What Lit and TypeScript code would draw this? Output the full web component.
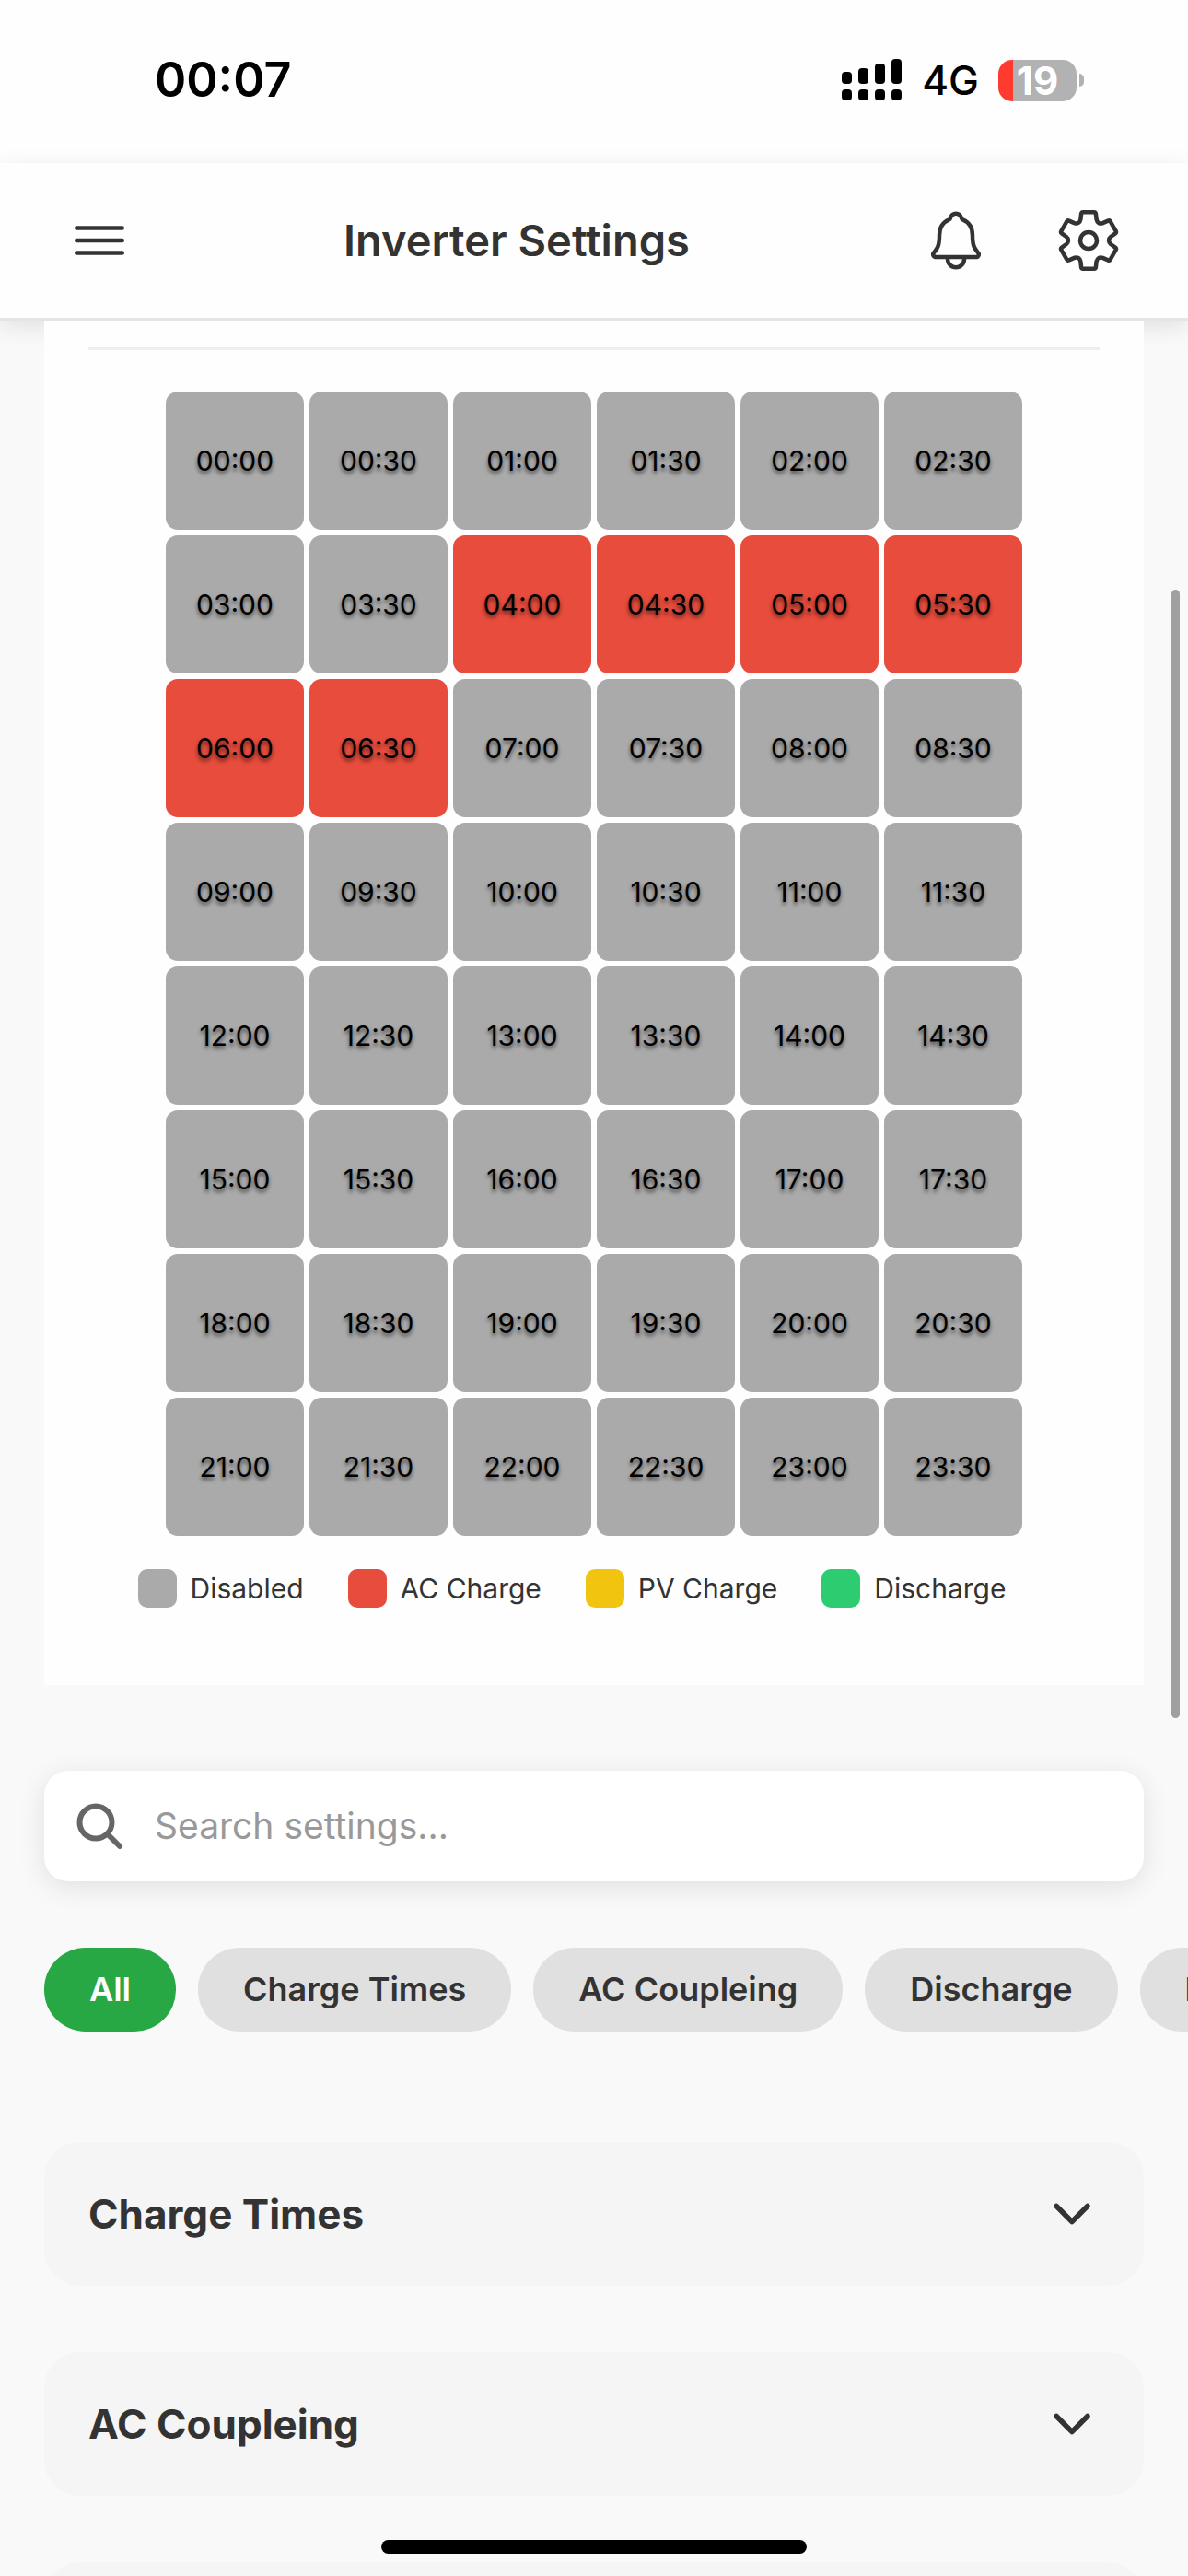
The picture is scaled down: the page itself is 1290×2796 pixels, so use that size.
import { LitElement, html, css, svg } from "lit";
import { customElement, property, state } from "lit/decorators.js";
import { classMap } from "lit/directives/class-map.js";

type Mode = "disabled" | "ac" | "pv" | "discharge";

interface Slot {
  time: string;
  mode: Mode;
}

const MODES: { mode: Mode; label: string }[] = [
  { mode: "disabled", label: "Disabled" },
  { mode: "ac", label: "AC Charge" },
  { mode: "pv", label: "PV Charge" },
  { mode: "discharge", label: "Discharge" },
];

const CATEGORIES = ["All", "Charge Times", "AC Coupleing", "Discharge", "Inverter"];
const SECTIONS = ["Charge Times", "AC Coupleing", "Discharge"];

/* Half-hour slots of one day; AC charging runs from 04:00 up to 07:00. */
const SLOTS: Slot[] = Array.from({ length: 48 }, (_, i) => {
  const hour = String(Math.floor(i / 2)).padStart(2, "0");
  const minute = i % 2 ? "30" : "00";
  return { time: `${hour}:${minute}`, mode: i >= 8 && i < 14 ? "ac" : "disabled" };
});

/* Outline of a six-toothed gear centred on the origin. */
function gearPath(): string {
  const parts: string[] = [];
  for (let k = 0; k < 6; k++) {
    const a = (k * Math.PI) / 3;
    const p = (x: number, y: number) =>
      `${(x * Math.cos(a) - y * Math.sin(a)).toFixed(2)} ${(x * Math.sin(a) + y * Math.cos(a)).toFixed(2)}`;
    parts.push(
      `${k === 0 ? "M" : "L"}${p(-8.6, -22.8)}`,
      `L${p(-7.9, -29)}`,
      `Q${p(-7.7, -30.8)} ${p(-6, -30.8)}`,
      `L${p(6, -30.8)}`,
      `Q${p(7.7, -30.8)} ${p(7.9, -29)}`,
      `L${p(8.6, -22.8)}`,
      `C${p(9.2, -19.3)} ${p(12.2, -17.6)} ${p(15.4, -18.9)}`
    );
  }
  return parts.join("") + "Z";
}

const menuIcon = svg`<path d="M80 160h352M80 256h352M80 352h352" stroke-width="32" />`;
const bellIcon = svg`<path stroke-width="32" d="M427.68 351.43C402 320 383.87 304 383.87 217.35 383.87 138 343.35 109.73 310 96c-4.43-1.82-8.6-6-9.95-10.55C294.2 65.54 277.8 48 256 48s-38.21 17.55-44 37.47c-1.35 4.6-5.52 8.71-9.95 10.53-33.39 13.75-73.87 41.92-73.87 121.35C128.13 304 110 320 84.32 351.43 73.68 364.45 83 384 101.61 384h308.88c18.51 0 27.77-19.61 17.19-32.57zM320 384v16a64 64 0 01-128 0v-16" />`;

@customElement("status-bar")
export class StatusBar extends LitElement {
  static styles = css`
    :host {
      display: flex;
      align-items: center;
      justify-content: space-between;
      height: 177px;
      padding: 0 113px 3px 168px;
      box-sizing: border-box;
      background: #fefefe;
      color: #000;
    }
    .clock {
      font-size: 52px;
      line-height: 64px;
      font-weight: 600;
    }
    .indicators {
      display: flex;
      align-items: center;
      gap: 21px;
    }
    .signal {
      display: block;
      width: 66px;
      height: 46px;
    }
    .network {
      font-size: 44px;
      line-height: 54px;
      font-weight: 500;
    }
    .battery {
      display: flex;
      align-items: center;
      gap: 3px;
    }
    .cell {
      width: 85px;
      height: 45px;
      border-radius: 15px;
      background: linear-gradient(to right, #ff3b30 16px, #b2b2b2 16px);
      color: #fff;
      font-size: 42px;
      line-height: 45px;
      font-weight: 700;
      text-align: center;
    }
    .tip {
      width: 5px;
      height: 14px;
      border-radius: 0 6px 6px 0;
      background: #b2b2b2;
    }
  `;

  render() {
    const tops = [14, 10, 5, 0];
    return html`
      <span class="clock">00:07</span>
      <div class="indicators">
        <svg class="signal" viewBox="0 0 66 46" aria-hidden="true">
          ${tops.map(
            (y, i) => svg`
              <rect x=${i * 18} y=${y} width="11" height=${27 - y} rx="4" />
              <rect x=${i * 18} y="33" width="11" height="12" rx="4" />`
          )}
        </svg>
        <span class="network">4G</span>
        <div class="battery">
          <div class="cell">19</div>
          <div class="tip"></div>
        </div>
      </div>
    `;
  }
}

@customElement("app-header")
export class AppHeader extends LitElement {
  static styles = css`
    :host {
      display: flex;
      align-items: center;
      justify-content: space-between;
      height: 171px;
      padding: 0 48px 0 72px;
      box-sizing: border-box;
      background: #fefefe;
      border-bottom: 3px solid #e5e5e5;
      box-shadow: 0 6px 24px rgba(0, 0, 0, 0.1);
      color: #333;
    }
    .title {
      margin: 0;
      font-size: 47px;
      line-height: 56px;
      font-weight: 600;
    }
    .actions {
      display: flex;
      gap: 24px;
    }
    .icon-button {
      display: block;
      padding: 0;
      border: 0;
      background: none;
      color: inherit;
    }
    .actions .icon-button {
      padding: 24px;
    }
    .icon {
      display: block;
      width: 72px;
      height: 72px;
      fill: none;
      stroke: currentColor;
      stroke-linecap: round;
      stroke-linejoin: round;
    }
  `;

  render() {
    return html`
      <button class="icon-button" aria-label="Menu">
        <svg class="icon" viewBox="0 0 512 512">${menuIcon}</svg>
      </button>
      <h1 class="title">Inverter Settings</h1>
      <div class="actions">
        <button class="icon-button" aria-label="Notifications">
          <svg class="icon" viewBox="0 0 512 512">${bellIcon}</svg>
        </button>
        <button class="icon-button" aria-label="Settings">
          <svg class="icon" viewBox="-36 -36 72 72" stroke-width="4.5">
            <path d=${gearPath()} />
            <circle r="9" />
          </svg>
        </button>
      </div>
    `;
  }
}

@customElement("schedule-card")
export class ScheduleCard extends LitElement {
  @property({ attribute: false }) slots: Slot[] = [];

  static styles = css`
    :host {
      display: block;
      padding: 29px 48px 84px;
      background: #fefefe;
    }
    .divider {
      height: 3px;
      margin: 0 0 45px;
      border: 0;
      background: #eee;
    }
    .grid {
      display: grid;
      grid-template-columns: repeat(6, 1fr);
      gap: 6px;
      max-width: 930px;
      margin: 0 auto;
    }
    .slot {
      aspect-ratio: 1;
      padding: 0;
      border: 0;
      border-radius: 13px;
      color: #000;
      font: inherit;
      font-size: 30px;
      line-height: 36px;
      font-weight: 400;
      text-shadow: 0 3px 4px rgba(0, 0, 0, 0.6);
    }
    .disabled {
      background: #aaa;
    }
    .ac {
      background: #e74c3c;
    }
    .pv {
      background: #f1c40f;
    }
    .discharge {
      background: #2ecc71;
    }
    .legend {
      display: flex;
      justify-content: center;
      margin: 36px 0 0;
      padding: 0;
      list-style: none;
    }
    .entry {
      display: flex;
      align-items: center;
      gap: 15px;
      margin-right: 48px;
      color: #333;
      font-size: 30px;
      line-height: 42px;
      white-space: nowrap;
    }
    .swatch {
      width: 42px;
      height: 42px;
      border-radius: 10px;
    }
  `;

  render() {
    return html`
      <hr class="divider" />
      <div class="grid">
        ${this.slots.map(
          (s) => html`<button class=${classMap({ slot: true, [s.mode]: true })}>${s.time}</button>`
        )}
      </div>
      <ul class="legend">
        ${MODES.map(
          (m) => html`<li class="entry">
            <span class=${classMap({ swatch: true, [m.mode]: true })}></span>${m.label}
          </li>`
        )}
      </ul>
    `;
  }
}

@customElement("settings-section")
export class SettingsSection extends LitElement {
  @property() label = "";

  static styles = css`
    :host {
      display: block;
    }
    .head {
      display: flex;
      align-items: center;
      justify-content: space-between;
      width: 100%;
      padding: 48px;
      border: 0;
      border-radius: 38px;
      background: #f5f5f5;
      color: #333;
      font: inherit;
      font-size: 44px;
      line-height: 60px;
      font-weight: 700;
      text-align: left;
    }
    .chevron {
      display: block;
      width: 60px;
      height: 60px;
      fill: none;
      stroke: currentColor;
      stroke-width: 48;
      stroke-linecap: round;
      stroke-linejoin: round;
    }
  `;

  render() {
    return html`
      <button class="head" aria-expanded="false">
        ${this.label}
        <svg class="chevron" viewBox="0 0 512 512"><path d="M112 184l144 144 144-144" /></svg>
      </button>
    `;
  }
}

@customElement("app-root")
export class AppRoot extends LitElement {
  @state() private category = "All";

  static styles = css`
    :host {
      display: flex;
      flex-direction: column;
      position: relative;
      height: 100vh;
      overflow: hidden;
      background: #f9f9f9;
      font-family: Inter, "Liberation Sans", sans-serif;
    }
    status-bar,
    app-header {
      flex: none;
    }
    .content {
      flex: 1;
      min-height: 0;
      overflow: hidden;
      padding: 0 48px;
    }
    .search {
      display: flex;
      align-items: center;
      gap: 34px;
      height: 120px;
      margin-top: 93px;
      padding: 0 35px;
      box-sizing: border-box;
      border-radius: 26px;
      background: #fff;
      box-shadow: 0 6px 30px rgba(0, 0, 0, 0.1);
    }
    .search-icon {
      flex: none;
      width: 51px;
      height: 51px;
      fill: none;
      stroke: #666;
      stroke-width: 6;
      stroke-linecap: round;
    }
    .search-input {
      flex: 1;
      min-width: 0;
      padding: 0;
      border: 0;
      outline: 0;
      background: none;
      color: #333;
      font: inherit;
      font-size: 39px;
      line-height: 48px;
    }
    .search-input::placeholder {
      color: #999;
      opacity: 1;
    }
    .chips {
      display: flex;
      gap: 24px;
      margin: 72px -48px 0 0;
      overflow: hidden;
    }
    .chip {
      flex: none;
      padding: 21px 49px;
      border: 0;
      border-radius: 45px;
      background: #e0e0e0;
      color: #333;
      font: inherit;
      font-size: 36px;
      line-height: 49px;
      font-weight: 600;
    }
    .chip.active {
      background: #28a745;
      color: #fff;
    }
    .sections {
      display: grid;
      gap: 72px;
      margin-top: 120px;
    }
    .scroll-thumb {
      position: absolute;
      top: 640px;
      right: 9px;
      width: 9px;
      height: 1225px;
      border-radius: 5px;
      background: #a0a0a0;
    }
    .home-indicator {
      position: absolute;
      bottom: 24px;
      left: 50%;
      width: 462px;
      height: 15px;
      margin-left: -231px;
      border-radius: 8px;
      background: #000;
    }
  `;

  render() {
    return html`
      <status-bar></status-bar>
      <app-header></app-header>
      <main class="content">
        <schedule-card .slots=${SLOTS}></schedule-card>
        <label class="search">
          <svg class="search-icon" viewBox="0 0 51 51" aria-hidden="true">
            <circle cx="21" cy="21" r="17.5" />
            <path d="M34 34L47 47" />
          </svg>
          <input class="search-input" type="text" placeholder="Search settings..." aria-label="Search settings" />
        </label>
        <nav class="chips" aria-label="Categories">
          ${CATEGORIES.map(
            (c) => html`<button
              class=${classMap({ chip: true, active: c === this.category })}
              @click=${() => (this.category = c)}
            >${c}</button>`
          )}
        </nav>
        <div class="sections">
          ${SECTIONS.map((s) => html`<settings-section .label=${s}></settings-section>`)}
        </div>
      </main>
      <div class="scroll-thumb"></div>
      <div class="home-indicator"></div>
    `;
  }
}
